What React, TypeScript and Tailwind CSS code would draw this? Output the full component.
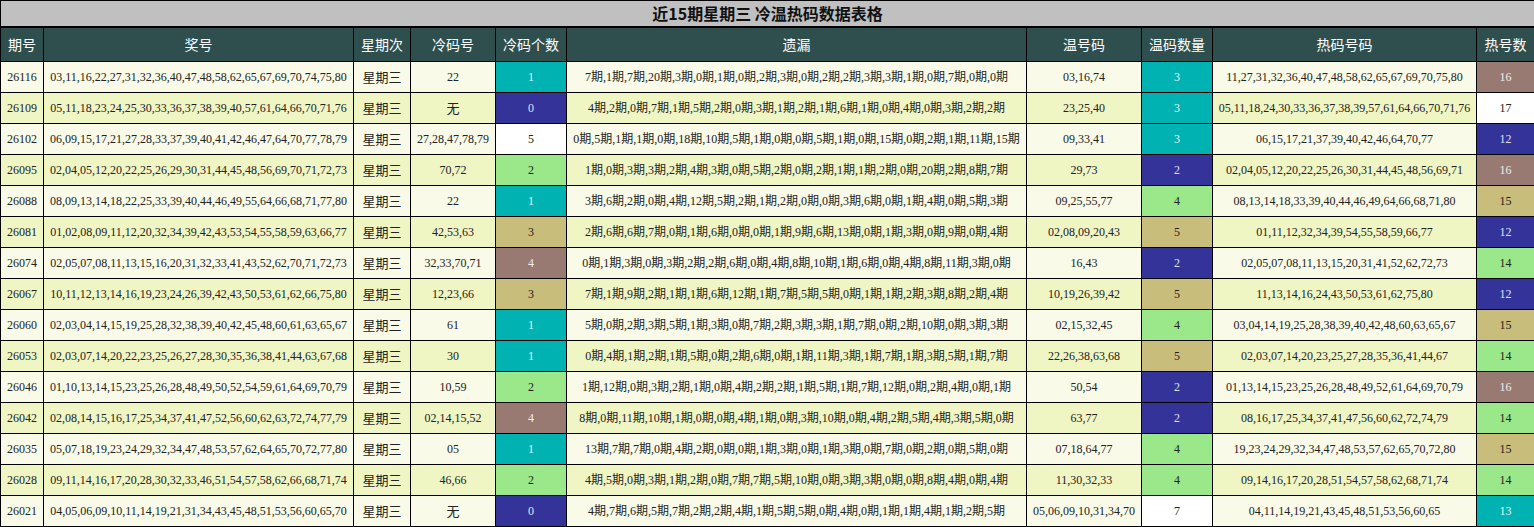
const C = { cyan: "bg-[#00b2b2] text-[#e6f2f2]", navy: "bg-[#333399] text-[#e0e0f0]", green: "bg-[#9ae88a] text-[#222]", tan: "bg-[#c9bd7c] text-[#222]", mauve: "bg-[#987a72] text-[#eee]", white: "bg-white text-[#222]" };
type K = keyof typeof C;

const rows: [string, string, string, string, K, string, string, string, K, string, string, K][] = [
  ["26116", "03,11,16,22,27,31,32,36,40,47,48,58,62,65,67,69,70,74,75,80", "22", "1", "cyan", "7期,1期,7期,20期,3期,0期,1期,0期,2期,3期,0期,2期,2期,3期,3期,1期,0期,7期,0期,0期", "03,16,74", "3", "cyan", "11,27,31,32,36,40,47,48,58,62,65,67,69,70,75,80", "16", "mauve"],
  ["26109", "05,11,18,23,24,25,30,33,36,37,38,39,40,57,61,64,66,70,71,76", "无", "0", "navy", "4期,2期,0期,7期,1期,5期,2期,0期,3期,1期,2期,1期,6期,1期,0期,4期,0期,3期,2期,2期", "23,25,40", "3", "cyan", "05,11,18,24,30,33,36,37,38,39,57,61,64,66,70,71,76", "17", "white"],
  ["26102", "06,09,15,17,21,27,28,33,37,39,40,41,42,46,47,64,70,77,78,79", "27,28,47,78,79", "5", "white", "0期,5期,1期,1期,0期,18期,10期,5期,1期,0期,0期,5期,1期,0期,15期,0期,2期,1期,11期,15期", "09,33,41", "3", "cyan", "06,15,17,21,37,39,40,42,46,64,70,77", "12", "navy"],
  ["26095", "02,04,05,12,20,22,25,26,29,30,31,44,45,48,56,69,70,71,72,73", "70,72", "2", "green", "1期,0期,3期,3期,2期,4期,3期,0期,5期,2期,0期,2期,1期,1期,2期,0期,20期,2期,8期,7期", "29,73", "2", "navy", "02,04,05,12,20,22,25,26,30,31,44,45,48,56,69,71", "16", "mauve"],
  ["26088", "08,09,13,14,18,22,25,33,39,40,44,46,49,55,64,66,68,71,77,80", "22", "1", "cyan", "3期,6期,2期,0期,4期,12期,5期,2期,1期,2期,0期,0期,3期,6期,0期,1期,4期,0期,5期,3期", "09,25,55,77", "4", "green", "08,13,14,18,33,39,40,44,46,49,64,66,68,71,80", "15", "tan"],
  ["26081", "01,02,08,09,11,12,20,32,34,39,42,43,53,54,55,58,59,63,66,77", "42,53,63", "3", "tan", "2期,6期,6期,7期,0期,1期,6期,0期,0期,1期,9期,6期,13期,0期,1期,3期,0期,9期,0期,4期", "02,08,09,20,43", "5", "tan", "01,11,12,32,34,39,54,55,58,59,66,77", "12", "navy"],
  ["26074", "02,05,07,08,11,13,15,16,20,31,32,33,41,43,52,62,70,71,72,73", "32,33,70,71", "4", "mauve", "0期,1期,3期,0期,3期,2期,2期,6期,0期,4期,8期,10期,1期,6期,0期,4期,8期,11期,3期,0期", "16,43", "2", "navy", "02,05,07,08,11,13,15,20,31,41,52,62,72,73", "14", "green"],
  ["26067", "10,11,12,13,14,16,19,23,24,26,39,42,43,50,53,61,62,66,75,80", "12,23,66", "3", "tan", "7期,1期,9期,2期,1期,1期,6期,12期,1期,7期,5期,5期,0期,1期,1期,2期,3期,8期,2期,4期", "10,19,26,39,42", "5", "tan", "11,13,14,16,24,43,50,53,61,62,75,80", "12", "navy"],
  ["26060", "02,03,04,14,15,19,25,28,32,38,39,40,42,45,48,60,61,63,65,67", "61", "1", "cyan", "5期,0期,2期,3期,5期,1期,3期,0期,7期,2期,3期,3期,1期,7期,0期,2期,10期,0期,3期,3期", "02,15,32,45", "4", "green", "03,04,14,19,25,28,38,39,40,42,48,60,63,65,67", "15", "tan"],
  ["26053", "02,03,07,14,20,22,23,25,26,27,28,30,35,36,38,41,44,63,67,68", "30", "1", "cyan", "0期,4期,1期,2期,1期,5期,0期,2期,6期,0期,1期,11期,3期,1期,7期,1期,3期,5期,1期,7期", "22,26,38,63,68", "5", "tan", "02,03,07,14,20,23,25,27,28,35,36,41,44,67", "14", "green"],
  ["26046", "01,10,13,14,15,23,25,26,28,48,49,50,52,54,59,61,64,69,70,79", "10,59", "2", "green", "1期,12期,0期,3期,2期,1期,0期,4期,2期,2期,1期,5期,1期,7期,12期,0期,2期,4期,0期,1期", "50,54", "2", "navy", "01,13,14,15,23,25,26,28,48,49,52,61,64,69,70,79", "16", "mauve"],
  ["26042", "02,08,14,15,16,17,25,34,37,41,47,52,56,60,62,63,72,74,77,79", "02,14,15,52", "4", "mauve", "8期,0期,11期,10期,1期,0期,0期,4期,1期,0期,3期,10期,0期,4期,2期,5期,4期,3期,5期,0期", "63,77", "2", "navy", "08,16,17,25,34,37,41,47,56,60,62,72,74,79", "14", "green"],
  ["26035", "05,07,18,19,23,24,29,32,34,47,48,53,57,62,64,65,70,72,77,80", "05", "1", "cyan", "13期,7期,7期,0期,4期,2期,0期,0期,1期,3期,0期,1期,3期,0期,7期,0期,2期,0期,5期,0期", "07,18,64,77", "4", "green", "19,23,24,29,32,34,47,48,53,57,62,65,70,72,80", "15", "tan"],
  ["26028", "09,11,14,16,17,20,28,30,32,33,46,51,54,57,58,62,66,68,71,74", "46,66", "2", "green", "4期,5期,0期,3期,1期,2期,0期,7期,7期,5期,10期,0期,3期,3期,0期,0期,8期,4期,0期,4期", "11,30,32,33", "4", "green", "09,14,16,17,20,28,51,54,57,58,62,68,71,74", "14", "green"],
  ["26021", "04,05,06,09,10,11,14,19,21,31,34,43,45,48,51,53,56,60,65,70", "无", "0", "navy", "4期,7期,6期,5期,7期,2期,2期,4期,1期,5期,5期,0期,4期,0期,1期,1期,4期,1期,2期,5期", "05,06,09,10,31,34,70", "7", "white", "04,11,14,19,21,43,45,48,51,53,56,60,65", "13", "cyan"],
];

const heads = ["期号", "奖号", "星期次", "冷码号", "冷码个数", "遗漏", "温号码", "温码数量", "热码号码", "热号数"];
const widths = ["w-[43px]", "w-[310px]", "w-[57px]", "w-[85px]", "w-[71px]", "w-[460px]", "w-[115px]", "w-[71px]", "w-[264px]", "w-[58px]"];
const serif = "font-[Liberation_Serif,Noto_Sans_CJK_SC,serif]";
const sans = "font-[Noto_Sans_CJK_SC,sans-serif]";

export default function App() {
  return (
    <div className="w-[1534px] h-[527px] overflow-hidden bg-white">
      <table className="w-[1534px] table-fixed border-collapse border border-black text-center">
        <colgroup>
          {widths.map((w, i) => <col key={i} className={w} />)}
        </colgroup>
        <thead>
          <tr>
            <th colSpan={10} className={`h-[26px] bg-[#c0c0c0] border border-black border-b-2 text-[16px] font-bold text-[#111] ${sans}`}>近15期星期三 冷温热码数据表格</th>
          </tr>
          <tr>
            {heads.map((h) => (
              <th key={h} className={`h-[35px] bg-[#2f4f4f] border border-black text-[14px] font-normal text-white ${sans}`}>{h}</th>
            ))}
          </tr>
        </thead>
        <tbody>
          {rows.map((r, i) => {
            const bg = i % 2 === 0 ? "bg-[#f9fbe8]" : "bg-[#f0f5c4]";
            const base = "h-[31px] border border-black p-0 whitespace-nowrap overflow-hidden text-[#222]";
            const td = `${base} text-[12px] ${serif}`;
            const cjk = `${base} text-[13px] ${sans}`;
            return (
              <tr key={r[0]} className={bg}>
                <td className={td}>{r[0]}</td>
                <td className={td}>{r[1]}</td>
                <td className={cjk}>星期三</td>
                <td className={r[2] === "无" ? cjk : td}>{r[2]}</td>
                <td className={`${td} ${C[r[4]]}`}>{r[3]}</td>
                <td className={td}>{r[5]}</td>
                <td className={td}>{r[6]}</td>
                <td className={`${td} ${C[r[8]]}`}>{r[7]}</td>
                <td className={td}>{r[9]}</td>
                <td className={`${td} ${C[r[11]]}`}>{r[10]}</td>
              </tr>
            );
          })}
        </tbody>
      </table>
    </div>
  );
}
